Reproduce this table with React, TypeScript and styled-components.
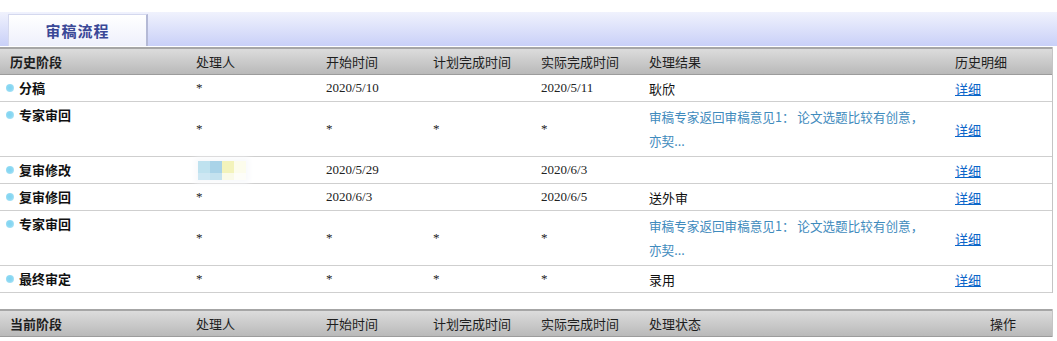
import React from 'react';
import styled, { createGlobalStyle } from 'styled-components';

const GlobalStyle = createGlobalStyle`
  body {
    margin: 0;
    background: #fff;
    font-family: "Noto Sans CJK SC", "Liberation Sans", sans-serif;
    color: #222;
  }
`;

const COLS = '196px 130px 107px 108px 108px 306px 96px';

const Page = styled.div`
  width: 1057px;
  padding-top: 12px;
`;

const TabBar = styled.div`
  height: 34px;
  display: flex;
  align-items: flex-end;
  padding-left: 8px;
  background: linear-gradient(#f0f2fd, #c9d0f8);
  border-bottom: 1px solid #fff;
`;

const Tab = styled.div`
  width: 140px;
  height: 32px;
  display: flex;
  align-items: center;
  justify-content: center;
  box-sizing: border-box;
  background: linear-gradient(#ffffff, #eef0fc);
  border: 1px solid #d4d8ee;
  border-right: 2px solid #b4b9d6;
  border-bottom: none;
  color: #3a4897;
  font-size: 15px;
  font-weight: bold;
  letter-spacing: 1px;
`;

const Table = styled.div`
  width: 1052px;
  border-right: 1px solid #c4c4c4;
`;

const HeaderRow = styled.div`
  display: grid;
  grid-template-columns: ${COLS};
  height: 25px;
  border-top: 2px solid #a6a6a6;
  border-bottom: 1px solid #9c9c9c;
  background: linear-gradient(#dcdcdc, #b9b9b9);
  align-items: center;
  font-size: 13px;
  color: #1e1e1e;
`;

const HeadCell = styled.div<{ $bold?: boolean; $center?: boolean }>`
  padding-left: ${(p) => (p.$bold ? '10px' : '0')};
  font-weight: ${(p) => (p.$bold ? 'bold' : 'normal')};
  text-align: ${(p) => (p.$center ? 'center' : 'left')};
  white-space: nowrap;
`;

const Row = styled.div<{ $tall?: boolean }>`
  display: grid;
  grid-template-columns: ${COLS};
  min-height: ${(p) => (p.$tall ? '54px' : '26px')};
  border-bottom: 1px solid #cfcfcf;
  align-items: center;
  font-size: 13px;
`;

const StageCell = styled.div`
  align-self: start;
  display: flex;
  align-items: center;
  gap: 5px;
  padding: 5px 0 0 6px;
  font-weight: bold;
  color: #111;
  line-height: 16px;
`;

const Dot = styled.span`
  width: 8px;
  height: 8px;
  border-radius: 50%;
  background: radial-gradient(circle at 45% 45%, #7fd4f2 0%, #8cd8f2 45%, #c8ecfa 100%);
  flex: none;
`;

const Plain = styled.div`
  font-family: "Liberation Serif", "Noto Sans CJK SC", serif;
  font-size: 13px;
  color: #222;
`;

const Result = styled.div`
  color: #111;
`;

const Desc = styled.div`
  max-width: 282px;
  font-size: 12.6px;
  line-height: 24px;
  color: #3f8bbd;
  padding: 2px 0 3px;
`;

const Link = styled.a`
  color: #0b66c9;
  text-decoration: underline;
  cursor: pointer;
`;

const Blur = styled.div`
  justify-self: start;
  display: grid;
  grid-template-columns: repeat(4, 12px);
  grid-template-rows: 12px 7px;
  margin-left: 2px;
  filter: blur(0.4px);
  box-shadow: 0 0 6px 3px #f8f9fb;
`;

const BlurCell = styled.span<{ $c: string }>`
  background: ${(p) => p.$c};
`;

const Spacer = styled.div`
  height: 16px;
`;

type Stage = {
  name: string;
  who: 'star' | 'blur';
  start: string;
  plan: string;
  actual: string;
  result?: string;
  desc?: boolean;
};

const DESC = '审稿专家返回审稿意见1： 论文选题比较有创意，亦契...';

const stages: Stage[] = [
  { name: '分稿', who: 'star', start: '2020/5/10', plan: '', actual: '2020/5/11', result: '耿欣' },
  { name: '专家审回', who: 'star', start: '*', plan: '*', actual: '*', desc: true },
  { name: '复审修改', who: 'blur', start: '2020/5/29', plan: '', actual: '2020/6/3' },
  { name: '复审修回', who: 'star', start: '2020/6/3', plan: '', actual: '2020/6/5', result: '送外审' },
  { name: '专家审回', who: 'star', start: '*', plan: '*', actual: '*', desc: true },
  { name: '最终审定', who: 'star', start: '*', plan: '*', actual: '*', result: '录用' },
];

const blurColors = ['#bfe2ef', '#a9d3e8', '#f3f3bb', '#fcfcec', '#cde7f3', '#c4e2ef', '#fafae8', '#fdfdf8'];

function App() {
  return (
    <Page>
      <GlobalStyle />
      <TabBar>
        <Tab>审稿流程</Tab>
      </TabBar>
      <Table>
        <HeaderRow>
          <HeadCell $bold>历史阶段</HeadCell>
          <HeadCell>处理人</HeadCell>
          <HeadCell>开始时间</HeadCell>
          <HeadCell>计划完成时间</HeadCell>
          <HeadCell>实际完成时间</HeadCell>
          <HeadCell>处理结果</HeadCell>
          <HeadCell>历史明细</HeadCell>
        </HeaderRow>
        {stages.map((s, i) => (
          <Row key={i} $tall={s.desc}>
            <StageCell>
              <Dot />
              {s.name}
            </StageCell>
            {s.who === 'star' ? (
              <Plain>*</Plain>
            ) : (
              <Blur>
                {blurColors.map((c, j) => (
                  <BlurCell key={j} $c={c} />
                ))}
              </Blur>
            )}
            <Plain>{s.start}</Plain>
            <Plain>{s.plan}</Plain>
            <Plain>{s.actual}</Plain>
            {s.desc ? <Desc>{DESC}</Desc> : <Result>{s.result}</Result>}
            <div>
              <Link>详细</Link>
            </div>
          </Row>
        ))}
      </Table>
      <Spacer />
      <Table>
        <HeaderRow>
          <HeadCell $bold>当前阶段</HeadCell>
          <HeadCell>处理人</HeadCell>
          <HeadCell>开始时间</HeadCell>
          <HeadCell>计划完成时间</HeadCell>
          <HeadCell>实际完成时间</HeadCell>
          <HeadCell>处理状态</HeadCell>
          <HeadCell $center>操作</HeadCell>
        </HeaderRow>
      </Table>
    </Page>
  );
}

export default App;
